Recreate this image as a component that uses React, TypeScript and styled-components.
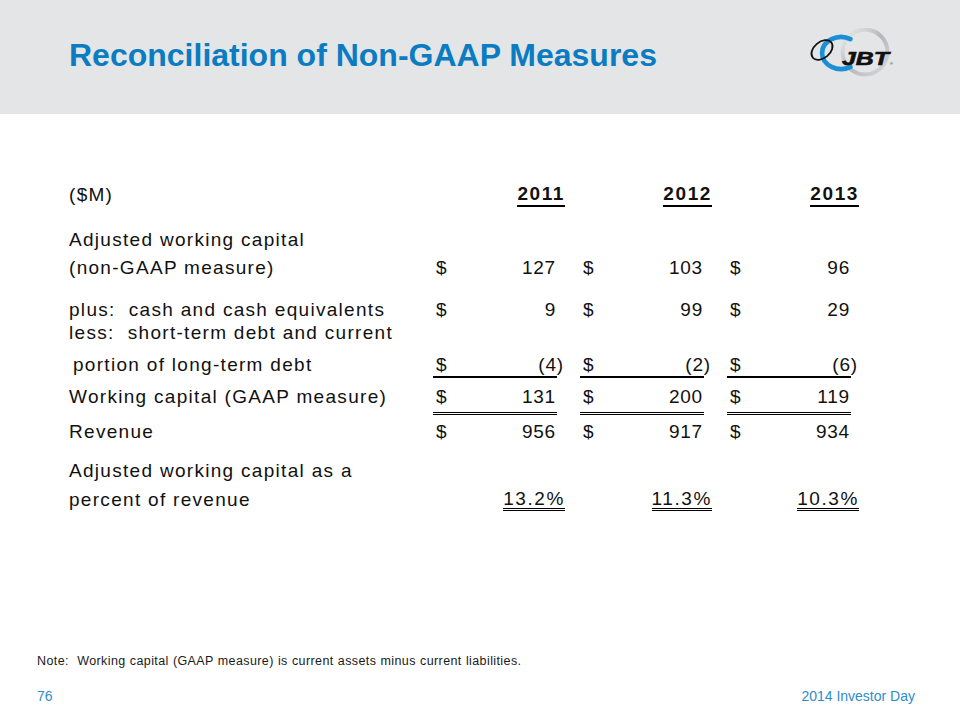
import styled, { createGlobalStyle } from "styled-components";

// colors
const blue = "#0b7cc1";
const footBlue = "#2d8ccd";
const band = "#e4e5e7";
const ink = "#111111";

const GlobalStyle = createGlobalStyle`
  body {
    margin: 0;
    background: #ffffff;
    font-family: "Liberation Sans", Arial, sans-serif;
    color: ${ink};
  }
`;

type Amt = { value: string; neg?: boolean };

const Logo = () => (
  <LogoSvg viewBox="0 0 90 50" width="90" height="50">
    <defs>
      <linearGradient id="ring" x1="0" y1="0" x2="1" y2="1">
        <stop offset="0" stopColor="#eeeff0" />
        <stop offset="0.5" stopColor="#b5b7ba" />
        <stop offset="1" stopColor="#d8d9db" />
      </linearGradient>
    </defs>
    <circle cx="58" cy="24" r="22.5" fill="none" stroke="url(#ring)" strokeWidth="4" />
    <path
      d="M43.5 11.1 A19 16 0 1 0 43.5 38.9"
      fill="none"
      stroke="#1b8fd5"
      strokeWidth="4.6"
      strokeLinecap="round"
    />
    <ellipse
      cx="15"
      cy="22"
      rx="12"
      ry="8"
      fill="none"
      stroke="#111"
      strokeWidth="1.8"
      transform="rotate(-40 15 22)"
    />
    <text
      x="35"
      y="36.5"
      fontFamily="Liberation Sans, Arial, sans-serif"
      fontWeight="700"
      fontStyle="italic"
      fontSize="18"
      fill="#111"
      stroke="#111"
      strokeWidth="0.6"
      textLength="47"
      lengthAdjust="spacingAndGlyphs"
    >
      JBT
    </text>
    <text x="83" y="37" fontSize="4" fill="#111" fontFamily="Liberation Sans, Arial, sans-serif">
      ®
    </text>
  </LogoSvg>
);

const Money = ({ a, rule }: { a: Amt; rule?: "single" | "double" }) => (
  <Amount $rule={rule}>
    <span>$</span>
    <span>
      {a.neg ? (
        <>
          ({a.value}
          <Close>)</Close>
        </>
      ) : (
        a.value
      )}
    </span>
  </Amount>
);

const App = () => {
  return (
    <>
      <GlobalStyle />
      <Slide>
        <Header>
          <Title>Reconciliation of Non-GAAP Measures</Title>
          <Logo />
        </Header>

        <Main>
          <Row $mt={69}>
            <Label $lh={23}>($M)</Label>
            <Year>2011</Year>
            <Year>2012</Year>
            <Year>2013</Year>
          </Row>

          <Row $mt={19}>
            <Label $lh={28}>
              Adjusted working capital
              <br />
              (non-GAAP measure)
            </Label>
            <Cell $lh={28}>
              <Money a={{ value: "127" }} />
            </Cell>
            <Cell $lh={28}>
              <Money a={{ value: "103" }} />
            </Cell>
            <Cell $lh={28}>
              <Money a={{ value: "96" }} />
            </Cell>
          </Row>

          <Row $mt={16}>
            <Label $lh={23}>plus:  cash and cash equivalents</Label>
            <Cell $lh={23}>
              <Money a={{ value: "9" }} />
            </Cell>
            <Cell $lh={23}>
              <Money a={{ value: "99" }} />
            </Cell>
            <Cell $lh={23}>
              <Money a={{ value: "29" }} />
            </Cell>
          </Row>

          <Row $mt={0}>
            <Label $lh={23}>less:  short-term debt and current</Label>
          </Row>

          <Row $mt={9}>
            <Label $lh={23} $indent>
              portion of long-term debt
            </Label>
            <Cell $lh={23}>
              <Money a={{ value: "4", neg: true }} rule="single" />
            </Cell>
            <Cell $lh={23}>
              <Money a={{ value: "2", neg: true }} rule="single" />
            </Cell>
            <Cell $lh={23}>
              <Money a={{ value: "6", neg: true }} rule="single" />
            </Cell>
          </Row>

          <Row $mt={7}>
            <Label $lh={23}>Working capital (GAAP measure)</Label>
            <Cell $lh={23}>
              <Money a={{ value: "131" }} rule="double" />
            </Cell>
            <Cell $lh={23}>
              <Money a={{ value: "200" }} rule="double" />
            </Cell>
            <Cell $lh={23}>
              <Money a={{ value: "119" }} rule="double" />
            </Cell>
          </Row>

          <Row $mt={5}>
            <Label $lh={23}>Revenue</Label>
            <Cell $lh={23}>
              <Money a={{ value: "956" }} />
            </Cell>
            <Cell $lh={23}>
              <Money a={{ value: "917" }} />
            </Cell>
            <Cell $lh={23}>
              <Money a={{ value: "934" }} />
            </Cell>
          </Row>

          <Row $mt={13}>
            <Label $lh={29}>
              Adjusted working capital as a
              <br />
              percent of revenue
            </Label>
            <Pct>13.2%</Pct>
            <Pct>11.3%</Pct>
            <Pct>10.3%</Pct>
          </Row>
        </Main>

        <Note>Note:  Working capital (GAAP measure) is current assets minus current liabilities.</Note>
        <Footer>
          <span>76</span>
          <span>2014 Investor Day</span>
        </Footer>
      </Slide>
    </>
  );
};

const Slide = styled.div`
  width: 960px;
  height: 720px;
  display: flex;
  flex-direction: column;
  overflow: hidden;
`;

const Header = styled.header`
  height: 114px;
  flex: none;
  background: ${band};
  display: flex;
  justify-content: space-between;
  align-items: flex-start;
  padding: 0 63px 0 69px;
  box-sizing: border-box;
`;

const Title = styled.h1`
  margin: 37px 0 0;
  font-size: 32px;
  line-height: 36px;
  font-weight: 700;
  color: ${blue};
`;

const LogoSvg = styled.svg`
  margin-top: 28px;
  display: block;
`;

const Main = styled.main`
  flex: 1;
  padding-left: 69px;
  font-size: 19px;
  letter-spacing: 1.3px;
`;

const Row = styled.div<{ $mt: number }>`
  display: grid;
  grid-template-columns: 349px repeat(3, 132px);
  column-gap: 15px;
  align-items: start;
  margin-top: ${(p) => p.$mt}px;
`;

const Label = styled.div<{ $lh: number; $indent?: boolean }>`
  line-height: ${(p) => p.$lh}px;
  white-space: pre;
  padding-left: ${(p) => (p.$indent ? 4 : 0)}px;
`;

const Cell = styled.div<{ $lh: number }>`
  align-self: end;
  line-height: ${(p) => p.$lh}px;
`;

const Amount = styled.div<{ $rule?: "single" | "double" }>`
  width: 124px;
  box-sizing: border-box;
  display: flex;
  justify-content: space-between;
  letter-spacing: 0.8px;
  padding: 0 1px ${(p) => (p.$rule === "double" ? 4 : 0)}px 3px;
  border-bottom: ${(p) =>
    p.$rule === "double"
      ? "3px double #000"
      : p.$rule === "single"
      ? "2px solid #000"
      : "none"};
`;

const Close = styled.span`
  margin-right: -8px;
`;

const Year = styled.span`
  justify-self: end;
  align-self: end;
  font-weight: 700;
  line-height: 22px;
  letter-spacing: 1.6px;
  border-bottom: 2px solid #000;
`;

const Pct = styled.span`
  justify-self: end;
  align-self: end;
  line-height: 18px;
  margin-bottom: 3px;
  letter-spacing: 1.6px;
  border-bottom: 3px double #000;
`;

const Note = styled.div`
  padding-left: 37px;
  font-size: 12.5px;
  line-height: 14px;
  letter-spacing: 0.4px;
  word-spacing: 0.3px;
  white-space: pre;
  color: #1a1a1a;
`;

const Footer = styled.footer`
  display: flex;
  justify-content: space-between;
  margin-top: 20px;
  padding: 0 45px 16px 37px;
  font-size: 14px;
  line-height: 16px;
  color: ${footBlue};
`;

export default App;
